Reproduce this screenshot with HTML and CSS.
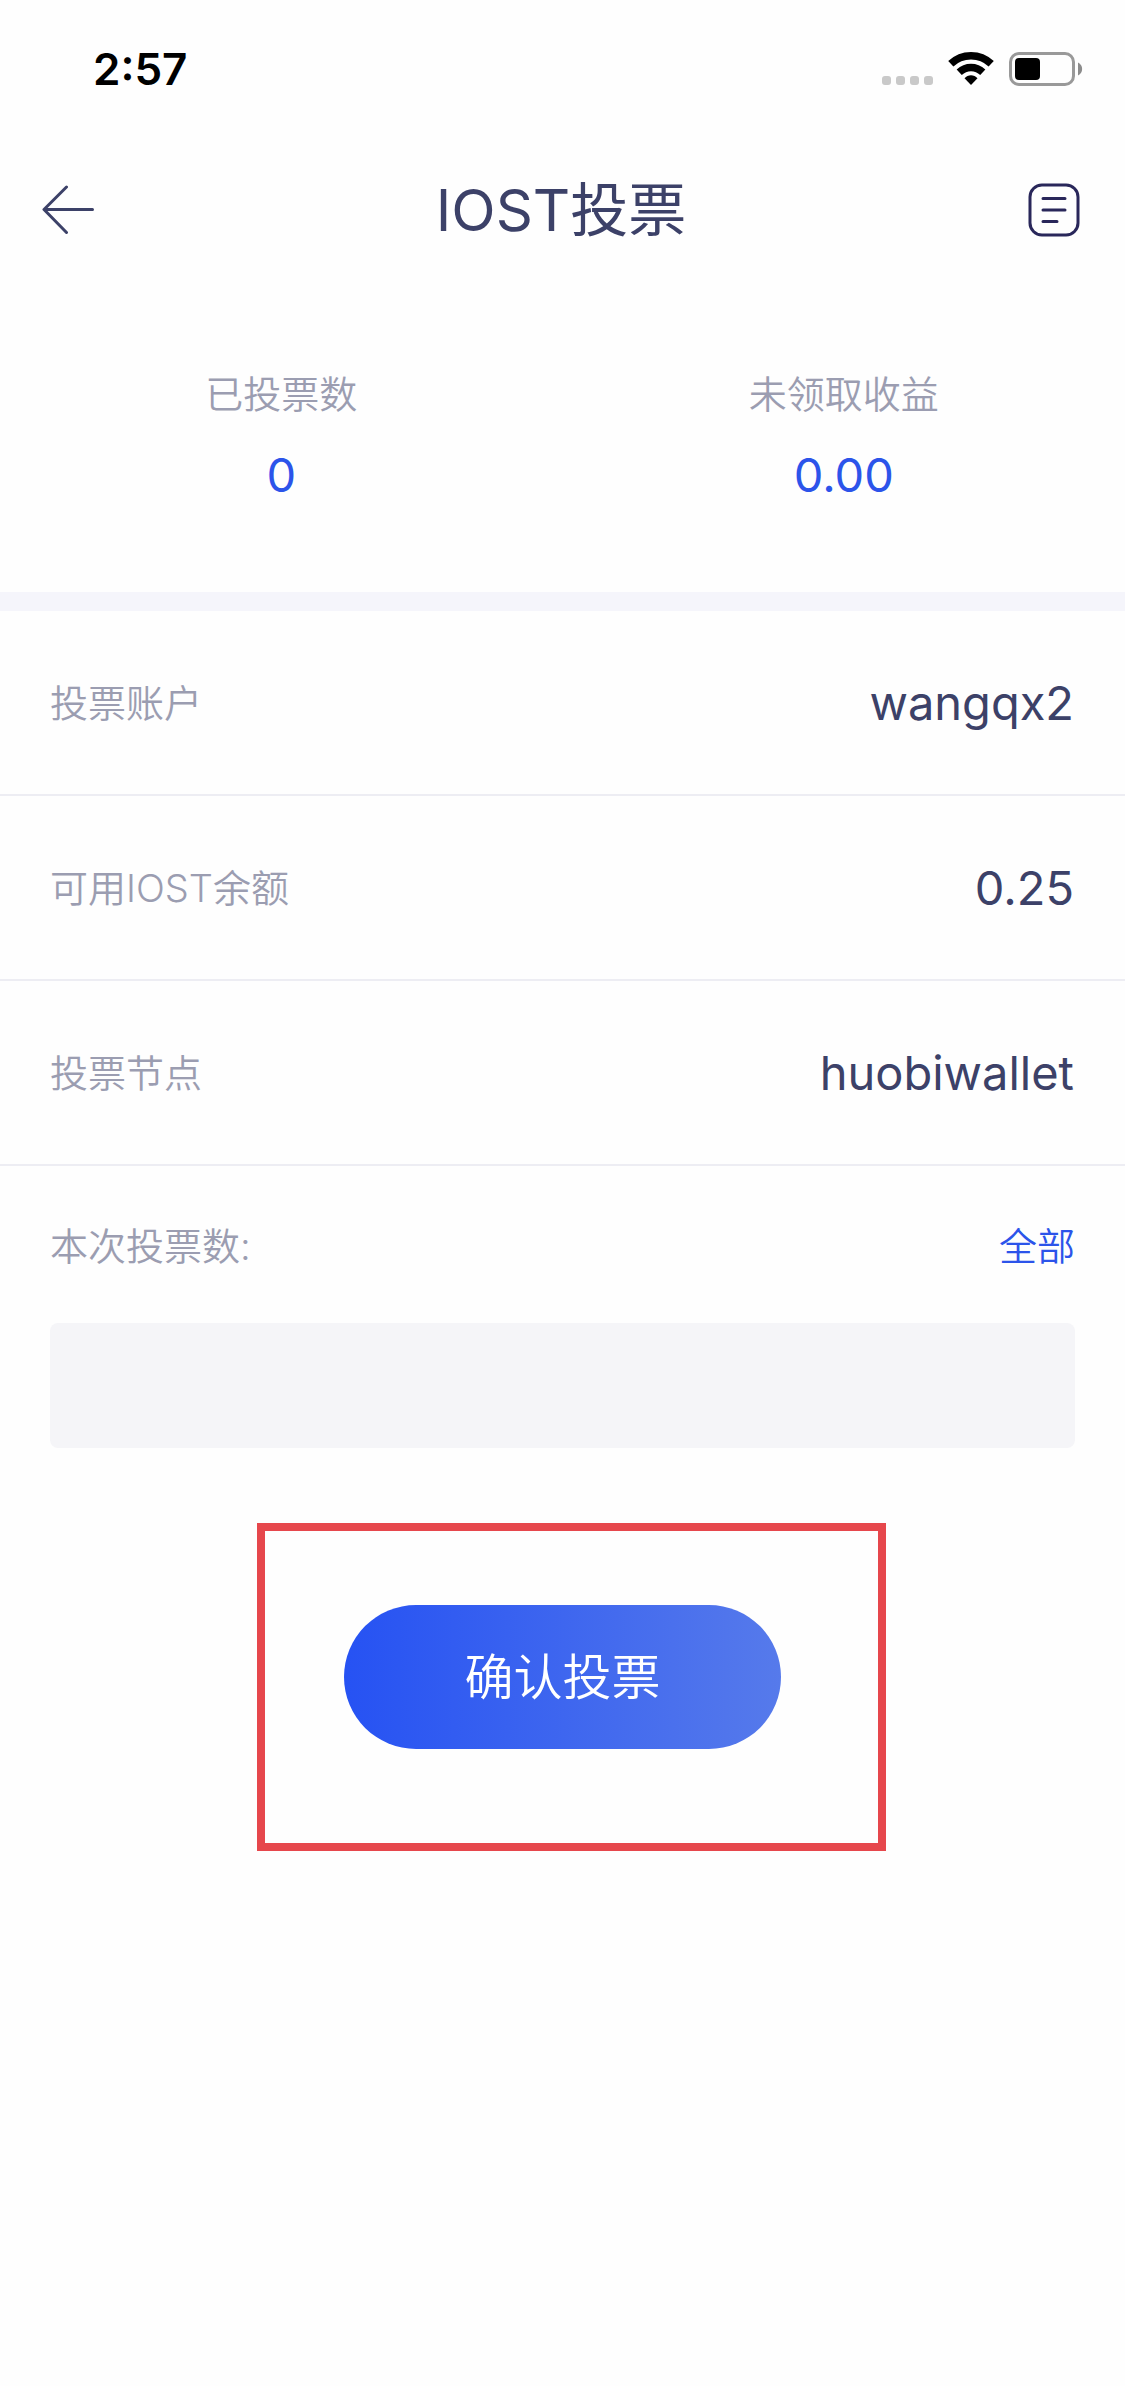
FILE: index.html
```html
<!DOCTYPE html>
<html lang="zh-CN">
<head>
<meta charset="utf-8">
<meta name="viewport" content="width=device-width, initial-scale=1">
<title>IOST投票</title>
<link rel="stylesheet" href="styles.css">
</head>
<body>
<div class="status-bar">
  <time class="clock">2:57</time>
  <div class="indicators">
    <svg class="signal" width="52" height="36" viewBox="0 0 52 36" aria-hidden="true">
      <g fill="#c9c9c9"><rect x="1" y="25" width="9" height="9" rx="3"/><rect x="15" y="25" width="9" height="9" rx="3"/><rect x="29" y="25" width="9" height="9" rx="3"/><rect x="43" y="25" width="9" height="9" rx="3"/></g>
    </svg>
    <svg class="wifi" width="46" height="36" viewBox="0 0 46 36" aria-hidden="true">
      <g fill="none" stroke="#000" stroke-width="7.5"><path d="M2.8 12.8C14 2 32 2 43.200 12.800"/><path d="M11.200 21.200C18 14.800 28 14.800 34.800 21.200"/></g>
      <path d="M16.500 27.200C20 23.300 26 23.300 29.500 27.200L23 34Z"/>
    </svg>
    <svg class="battery" width="74" height="36" viewBox="0 0 74 36" aria-hidden="true">
      <rect x="1.500" y="2.500" width="63" height="31" rx="8.500" fill="none" stroke="#999" stroke-width="3"/>
      <rect x="6" y="7" width="25" height="22" rx="4"/>
      <path d="M69 11.500C74.500 14 74.500 22 69 24.500Z" fill="#8c8c8c"/>
    </svg>
  </div>
</div>

<header class="nav">
  <button class="icon-button" type="button" aria-label="返回">
    <svg width="54" height="54" viewBox="0 0 54 54" fill="none" stroke="#3c4168" stroke-width="3" stroke-linecap="round" stroke-linejoin="round" aria-hidden="true"><path d="M24.500 4L2 26.500L24.500 49.500M2.500 26.500H50.500"/></svg>
  </button>
  <h1 class="title">IOST投票</h1>
  <button class="icon-button icon-button-end" type="button" aria-label="投票记录">
    <svg width="52" height="54" viewBox="0 0 52 54" fill="none" stroke="#29275a" stroke-width="3" stroke-linecap="round" aria-hidden="true"><rect x="2" y="2" width="48" height="50" rx="12"/><path d="M15 15.500H37M15 27H37M15 38.500H29"/></svg>
  </button>
</header>

<main class="content">
  <dl class="stats">
    <div class="stat"><dt class="label">已投票数</dt><dd class="value stat-value">0</dd></div>
    <div class="stat"><dt class="label">未领取收益</dt><dd class="value stat-value">0.00</dd></div>
  </dl>

  <dl class="details">
    <div class="detail"><dt class="label">投票账户</dt><dd class="value">wangqx2</dd></div>
    <div class="detail"><dt class="label">可用IOST余额</dt><dd class="value">0.25</dd></div>
    <div class="detail"><dt class="label">投票节点</dt><dd class="value">huobiwallet</dd></div>
  </dl>

  <form class="vote-form">
    <div class="form-head">
      <label class="label" for="votes">本次投票数:</label>
      <button class="all-button" type="button">全部</button>
    </div>
    <input class="votes-input" id="votes" type="text" inputmode="decimal">
    <div class="submit-area">
      <button class="submit-button" type="submit">确认投票</button>
    </div>
  </form>
</main>
</body>
</html>
```
FILE: styles.css
```css
* {
  box-sizing: border-box;
}

body {
  display: flex;
  flex-direction: column;
  min-height: 100vh;
  margin: 0;
  background: #fefefe;
  color: #3c4168;
  font-family: Inter, "Noto Sans CJK SC", sans-serif;
}

button,
input {
  padding: 0;
  border: 0;
  background: none;
  color: inherit;
  font: inherit;
}

dl,
dd {
  margin: 0;
}

.status-bar {
  display: flex;
  align-items: center;
  justify-content: space-between;
  height: 138px;
  padding: 0 42px 0 93px;
}

.clock {
  color: #000;
  font-size: 44px;
  font-weight: 600;
  line-height: 52px;
}

.indicators {
  display: flex;
  gap: 15px;
}

.indicators svg {
  display: block;
}

.nav {
  display: grid;
  grid-template-columns: 1fr auto 1fr;
  align-items: center;
  height: 144px;
  padding: 0 45px 0 42px;
}

.icon-button {
  display: flex;
  justify-self: start;
}

.icon-button-end {
  justify-self: end;
}

.title {
  margin: 0;
  font-size: 58px;
  font-weight: 400;
  line-height: 72px;
}

.content {
  flex: 1;
}

.label {
  color: #9b9db1;
  font-size: 38px;
  font-weight: 350;
  line-height: 56px;
}

.value {
  font-size: 47px;
  line-height: 60px;
}

.stats {
  display: grid;
  grid-template-columns: 1fr 1fr;
  padding: 84px 0 87px;
  border-bottom: 19px solid #f5f5fb;
  text-align: center;
}

.stat {
  display: grid;
  gap: 23px;
}

.stat-value {
  color: #2c54ea;
}

.detail {
  display: flex;
  align-items: center;
  justify-content: space-between;
  min-height: 185px;
  padding: 0 51px 0 50px;
  border-bottom: 2px solid #ededf3;
}

.vote-form {
  padding: 52px 50px 102px;
}

.form-head {
  display: flex;
  justify-content: space-between;
}

.all-button {
  color: #2c54ea;
  font-size: 38px;
  font-weight: 350;
  line-height: 56px;
}

.votes-input {
  display: block;
  width: 100%;
  height: 125px;
  margin-top: 49px;
  padding: 0 30px;
  border-radius: 8px;
  background: #f5f5f8;
  font-size: 47px;
}

.submit-area {
  position: relative;
  width: fit-content;
  margin: 157px auto 0;
}

/* Highlight frame laid over the confirm action */
.submit-area::after {
  content: "";
  position: absolute;
  inset: -82px -105px -102px -87px;
  border: 8px solid #e6474c;
  pointer-events: none;
}

.submit-button {
  display: block;
  width: 437px;
  height: 144px;
  padding-bottom: 8px;
  border-radius: 72px;
  background: linear-gradient(90deg, #2652f3, #567aeb);
  color: #fff;
  font-size: 49px;
  font-weight: 350;
}
```
